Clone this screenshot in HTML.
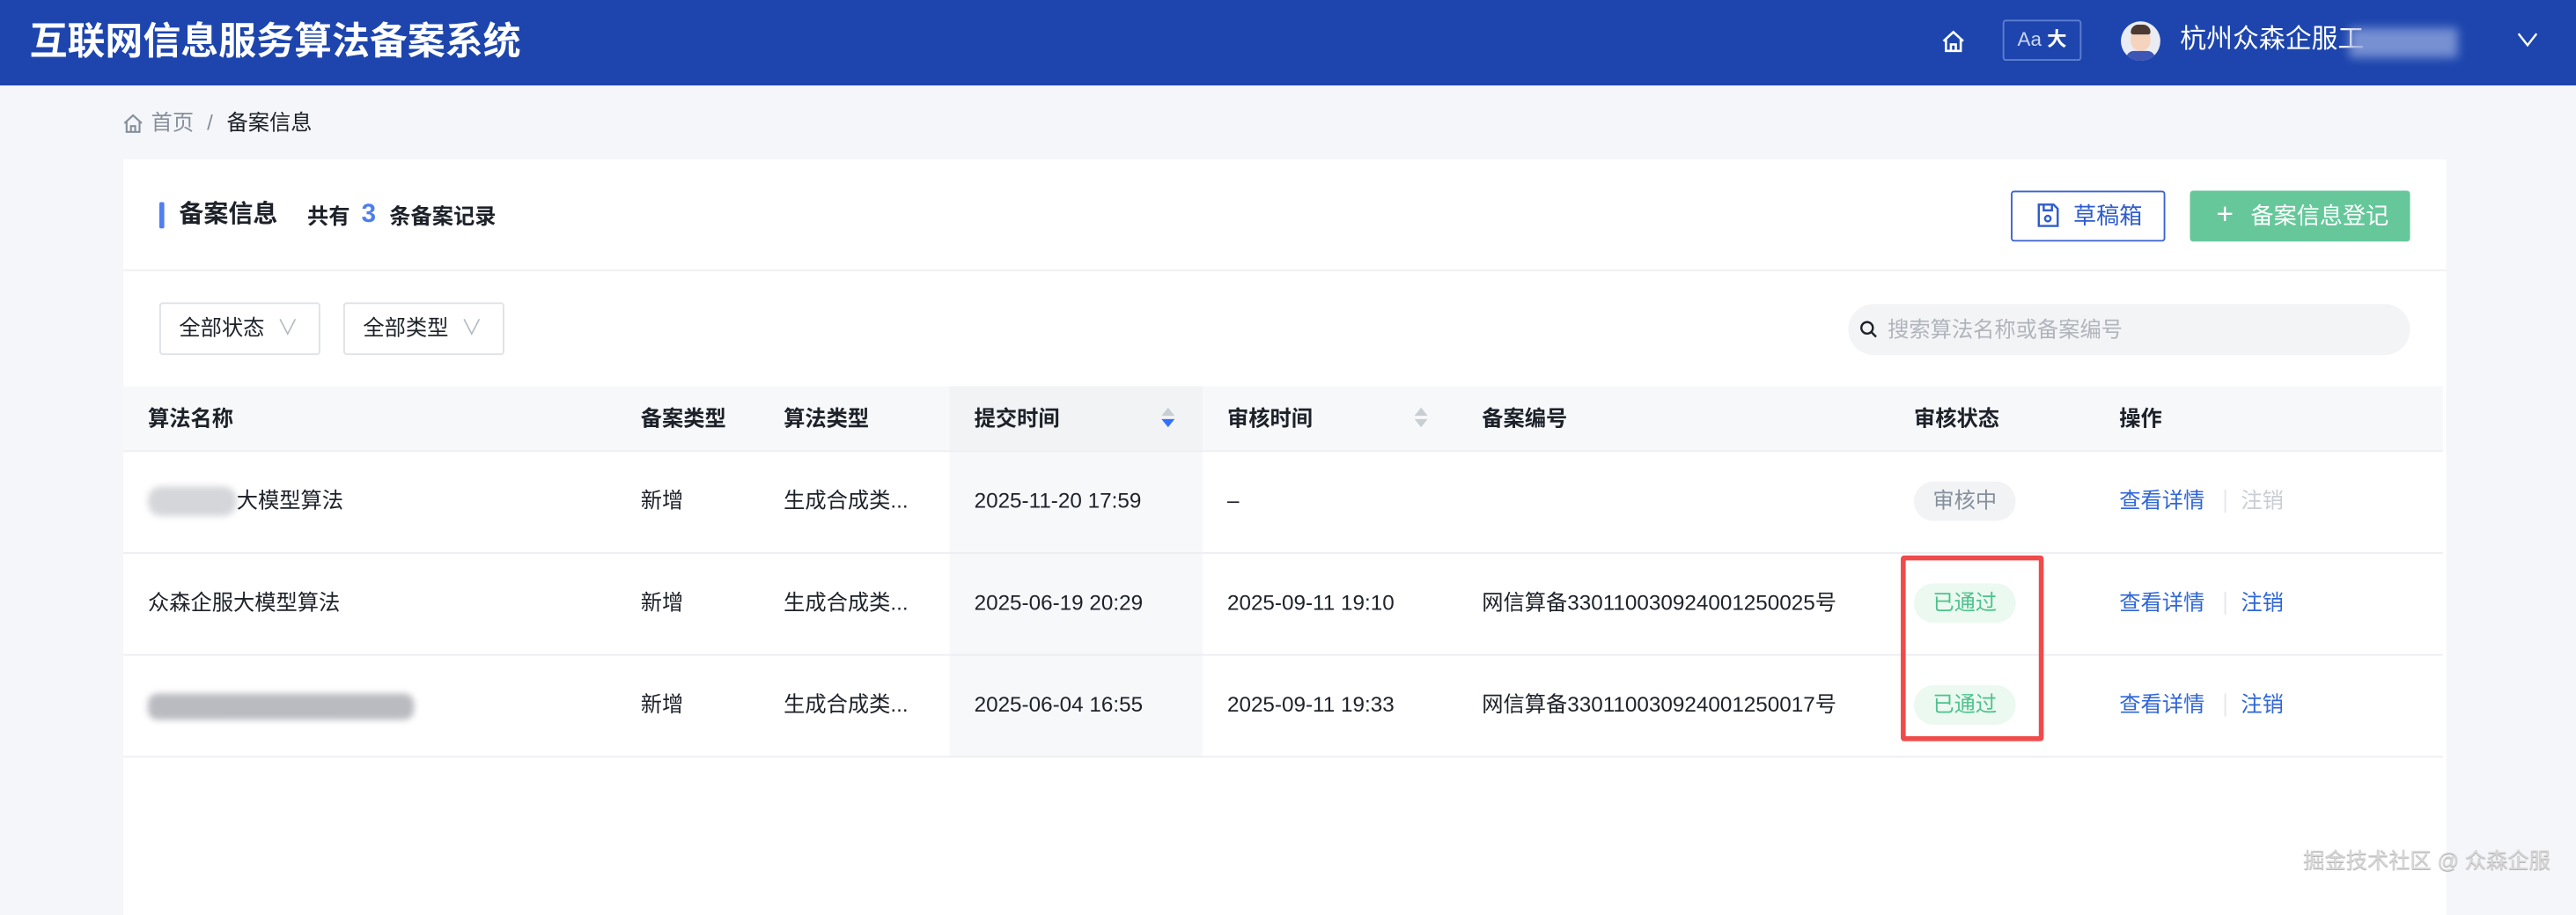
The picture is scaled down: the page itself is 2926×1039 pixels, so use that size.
<!DOCTYPE html>
<html><head><meta charset="utf-8"><style>
*{box-sizing:border-box;margin:0;padding:0}
html,body{width:2926px;height:1018px;overflow:hidden;background:#f5f6f9}
#w{position:absolute;left:0;top:0;width:1568px;height:546px;transform:scale(1.86607);transform-origin:0 0;font-family:"Liberation Sans","Noto Sans CJK SC",sans-serif;color:#1d2129;font-size:13px}
.a{position:absolute;white-space:nowrap;line-height:18px}
.hd{left:0;top:0;width:1568px;height:52px;background:#1d45ad}
.card{left:75px;top:97px;width:1414px;height:460px;background:#fff}
.th{font-weight:bold;top:246px}
.row{left:75px;width:1412px;height:1px;background:#eceef2}
.tag{width:62px;height:24px;border-radius:12px;text-align:center;line-height:24px!important}
.blue{color:#2f66d6}
</style></head><body><div id="w">
<div class="a hd"></div>
<div class="a" style="left:18px;top:10px;font-size:23px;line-height:30px;font-weight:bold;color:#fff">互联网信息服务算法备案系统</div>
<svg class="a" style="left:1181px;top:17px" width="16" height="16" viewBox="0 0 16 16" fill="none" stroke="#fff" stroke-width="1.4"><path d="M2 8 8 2.5 14 8M3.5 6.8V14h9V6.8M6.5 14v-4h3v4"/></svg>
<div class="a" style="left:1219px;top:12px;width:48px;height:25px;border:1px solid #5d7fd4;border-radius:2px;color:#c9d5f3;font-size:12px;line-height:23px;text-align:center">Aa <b style="color:#fff">大</b></div>
<div class="a" style="left:1291px;top:13px;width:24px;height:24px;border-radius:50%;background:#e9ecf2;overflow:hidden"><div class="a" style="left:6px;top:4px;width:12px;height:14px;border-radius:6px;background:#f6d3bd"></div><div class="a" style="left:6px;top:2px;width:12px;height:6px;border-radius:6px 6px 2px 2px;background:#4a3a33"></div><div class="a" style="left:3px;top:18px;width:18px;height:10px;border-radius:8px;background:#3d55b4"></div></div>
<div class="a" style="left:1327px;top:15px;font-size:16px;line-height:20px;color:#fff">杭州众森企服工</div>
<div class="a" style="left:1430px;top:17px;width:66px;height:18px;background:#8ea3dc;filter:blur(3px);opacity:.8"></div>
<svg class="a" style="left:1532px;top:19px" width="13" height="10" viewBox="0 0 13 10" fill="none" stroke="#fff" stroke-width="1.3"><path d="M1 1.5 6.5 8.5 12 1.5"/></svg>
<svg class="a" style="left:74px;top:68px" width="14" height="14" viewBox="0 0 16 16" fill="none" stroke="#86909c" stroke-width="1.3"><path d="M2 8 8 2.5 14 8M3.5 6.8V14h9V6.8M6.5 14v-4h3v4"/></svg>
<div class="a" style="left:92px;top:66px;color:#86909c">首页</div>
<div class="a" style="left:126px;top:66px;color:#86909c">/</div>
<div class="a" style="left:138px;top:66px;color:#1d2129">备案信息</div>
<div class="a card"></div>
<div class="a" style="left:97px;top:123px;width:3px;height:16px;background:#4e7ef0;border-radius:1px"></div>
<div class="a" style="left:109px;top:122px;font-size:15px;font-weight:bold">备案信息</div>
<div class="a" style="left:187px;top:123px;font-weight:bold">共有</div>
<div class="a" style="left:220px;top:121px;font-size:16px;line-height:20px;font-weight:bold;color:#4e7ef0">3</div>
<div class="a" style="left:237px;top:123px;font-weight:bold">条备案记录</div>
<div class="a" style="left:1224px;top:116px;width:94px;height:31px;border:1px solid #3a62d0;border-radius:2px;color:#2f5ccb;line-height:29px;padding-left:37px;font-size:14px">草稿箱</div>
<svg class="a" style="left:1239px;top:123px" width="15" height="16" viewBox="0 0 15 16" fill="none" stroke="#2f5ccb" stroke-width="1.3"><path d="M2 1.5h9l2.5 2.5v10.5h-11.5zM5 1.5v3.5h5V1.5"/><circle cx="7.5" cy="10" r="1.7"/></svg>
<div class="a" style="left:1333px;top:116px;width:134px;height:31px;background:#66c79b;border-radius:2px;color:#fff;line-height:31px;padding-left:37px;font-size:14px">备案信息登记</div>
<div class="a" style="left:1349px;top:115px;color:#fff;font-size:18px;line-height:31px">+</div>
<div class="a" style="left:75px;top:164px;width:1414px;height:1px;background:#eef0f3"></div>
<div class="a" style="left:97px;top:184px;width:98px;height:32px;border:1px solid #dfe2e7;border-radius:2px;padding-left:11px;line-height:30px">全部状态 <span style="color:#b5bac3;margin-left:4px">∨</span></div>
<div class="a" style="left:209px;top:184px;width:98px;height:32px;border:1px solid #dfe2e7;border-radius:2px;padding-left:11px;line-height:30px">全部类型 <span style="color:#b5bac3;margin-left:4px">∨</span></div>
<div class="a" style="left:1125px;top:185px;width:342px;height:31px;background:#f3f4f6;border-radius:16px;color:#b0b4bb;line-height:31px;padding-left:24px">搜索算法名称或备案编号</div>
<svg class="a" style="left:1132px;top:195px" width="11" height="11" viewBox="0 0 11 11" fill="none" stroke="#1d2129" stroke-width="1.3"><circle cx="4.5" cy="4.5" r="3.5"/><path d="M7 7l3 3"/></svg>
<div class="a" style="left:75px;top:235px;width:1412px;height:39px;background:#f7f8fa"></div>
<div class="a" style="left:578px;top:235px;width:154px;height:226px;background:#f7f8fa"></div>
<div class="a" style="left:578px;top:235px;width:154px;height:39px;background:#f2f3f5"></div>
<div class="a th" style="left:90px">算法名称</div>
<div class="a th" style="left:390px">备案类型</div>
<div class="a th" style="left:477px">算法类型</div>
<div class="a th" style="left:593px">提交时间</div>
<div class="a" style="left:707px;top:248px;width:0;height:0;border:4px solid transparent;border-bottom:5px solid #c9cdd4;border-top:0"></div>
<div class="a" style="left:707px;top:255px;width:0;height:0;border:4px solid transparent;border-top:5px solid #3370ff;border-bottom:0"></div>
<div class="a th" style="left:747px">审核时间</div>
<div class="a" style="left:861px;top:248px;width:0;height:0;border:4px solid transparent;border-bottom:5px solid #c9cdd4;border-top:0"></div>
<div class="a" style="left:861px;top:255px;width:0;height:0;border:4px solid transparent;border-top:5px solid #c9cdd4;border-bottom:0"></div>
<div class="a th" style="left:902px">备案编号</div>
<div class="a th" style="left:1165px">审核状态</div>
<div class="a th" style="left:1290px">操作</div>
<div class="a row" style="top:274px"></div>
<div class="a row" style="top:336px"></div>
<div class="a row" style="top:398px"></div>
<div class="a row" style="top:460px"></div>
<!-- row1 -->
<div class="a" style="left:90px;top:296px;width:54px;height:18px;background:#d4d6da;filter:blur(2px);border-radius:8px"></div>
<div class="a" style="left:144px;top:296px">大模型算法</div>
<div class="a" style="left:390px;top:296px">新增</div>
<div class="a" style="left:477px;top:296px">生成合成类...</div>
<div class="a" style="left:593px;top:296px">2025-11-20 17:59</div>
<div class="a" style="left:747px;top:296px">–</div>
<div class="a tag" style="left:1165px;top:293px;background:#f2f3f5;color:#86909c">审核中</div>
<div class="a blue" style="left:1290px;top:296px">查看详情</div>
<div class="a" style="left:1354px;top:298px;width:1px;height:14px;background:#e5e6eb"></div>
<div class="a" style="left:1364px;top:296px;color:#c9cdd4">注销</div>
<!-- row2 -->
<div class="a" style="left:90px;top:358px">众森企服大模型算法</div>
<div class="a" style="left:390px;top:358px">新增</div>
<div class="a" style="left:477px;top:358px">生成合成类...</div>
<div class="a" style="left:593px;top:358px">2025-06-19 20:29</div>
<div class="a" style="left:747px;top:358px">2025-09-11 19:10</div>
<div class="a" style="left:902px;top:358px">网信算备330110030924001250025号</div>
<div class="a tag" style="left:1165px;top:355px;background:#ebf9f1;color:#4cc38a">已通过</div>
<div class="a blue" style="left:1290px;top:358px">查看详情</div>
<div class="a" style="left:1354px;top:360px;width:1px;height:14px;background:#e5e6eb"></div>
<div class="a blue" style="left:1364px;top:358px">注销</div>
<!-- row3 -->
<div class="a" style="left:90px;top:422px;width:162px;height:16px;background:#b9bbc0;filter:blur(2px);border-radius:6px"></div>
<div class="a" style="left:390px;top:420px">新增</div>
<div class="a" style="left:477px;top:420px">生成合成类...</div>
<div class="a" style="left:593px;top:420px">2025-06-04 16:55</div>
<div class="a" style="left:747px;top:420px">2025-09-11 19:33</div>
<div class="a" style="left:902px;top:420px">网信算备330110030924001250017号</div>
<div class="a tag" style="left:1165px;top:417px;background:#ebf9f1;color:#4cc38a">已通过</div>
<div class="a blue" style="left:1290px;top:420px">查看详情</div>
<div class="a" style="left:1354px;top:422px;width:1px;height:14px;background:#e5e6eb"></div>
<div class="a blue" style="left:1364px;top:420px">注销</div>
<div class="a" style="left:1157px;top:338px;width:87px;height:113px;border:3px solid #f04b4b;border-radius:2px"></div>
<div class="a" style="left:1402px;top:515px;font-size:13px;color:#d8d8d8;text-shadow:0 0.5px 0.5px #777"> 掘金技术社区 @ 众森企服</div>
</div></body></html>
